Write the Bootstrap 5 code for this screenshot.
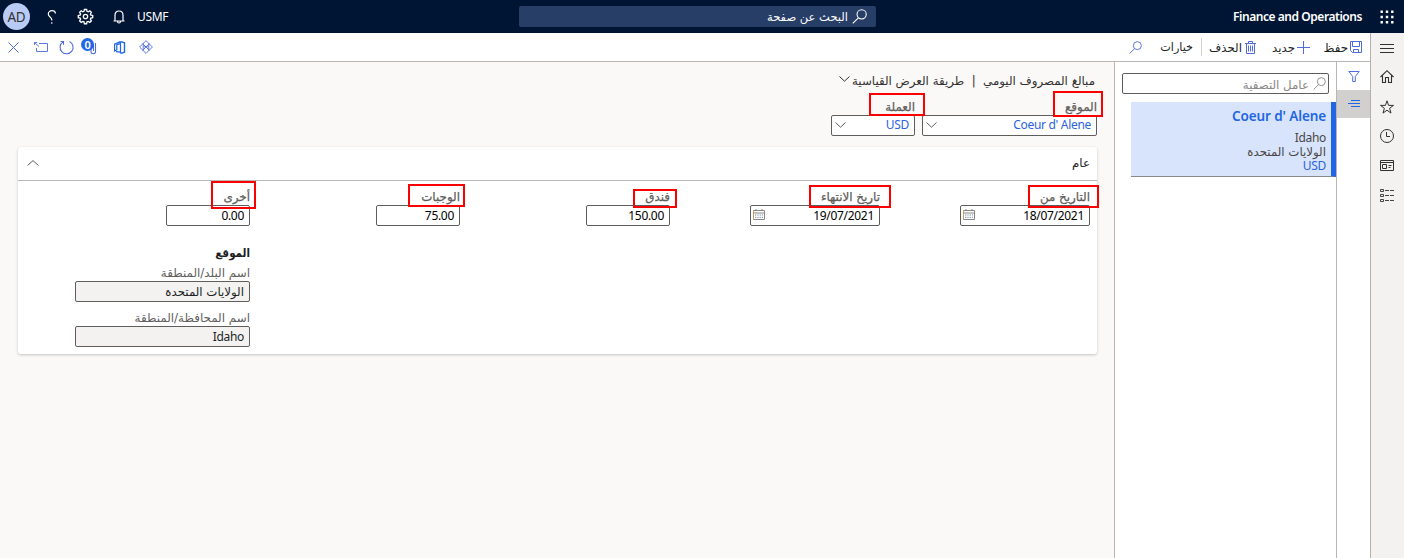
<!DOCTYPE html>
<html lang="ar" dir="rtl">
<head>
<meta charset="utf-8">
<title>Finance and Operations</title>
<link href="https://cdn.jsdelivr.net/npm/bootstrap@5.3.0/dist/css/bootstrap.min.css" rel="stylesheet">
<style>
body{font:12px/16px "Noto Sans","DejaVu Sans",sans-serif;letter-spacing:-.3px;color:#323130;background:#faf9f8;height:558px;overflow:hidden}
svg{display:block;fill:none;stroke:currentColor;flex:none;overflow:visible}
.dots{fill:#fff;stroke:none}
.ar{font-family:"DejaVu Sans",sans-serif;font-size:11.8px;letter-spacing:0;white-space:nowrap}
.topbar{height:33px;background:#001433;color:#fff}
.app-name{font-size:12px;font-weight:600;letter-spacing:-.45px;white-space:nowrap;padding-top:1px}
.avatar{width:27px;height:27px;background:#b9cbf5;color:#323130;font-size:13.5px}
.searchbar{inset-inline-end:519px;top:6px;width:357px;height:21px;background:#273e67;border-radius:2px;padding-inline-start:9px}
.searchbar .ar{font-size:11.5px;padding-top:1px}
.body-row{height:525px}
.rail{width:34px;background:#f3f2f1;border-left:1px solid #b3b0ad;padding:7px 1px 0 0;gap:15.8px}
.toolbar{height:29px;background:#fff;border-bottom:1px solid #b9b5b2;flex:none}
.toolbar .ar{font-size:11.8px;padding-top:2px;color:#201f1e}
.blue{color:#4f6bdc}
.tabs-col{width:34px;background:#fff;border-left:1px solid #b9b5b2}
.tab{height:28px}
.tab-on{background:#d2d0ce}
.list-col{width:222px;background:#fff;border-left:1px solid #b9b5b2;padding-top:11px}
.filter{width:207px;height:21px;border:1px solid #605e5c;border-radius:2px;margin-right:7px;color:#8a8886;padding:0 2px}
.filter .ar{padding-top:2px}
.record{width:205px;height:75px;background:#d8e4fb;border-right:5px solid #2266e3;border-bottom:1px solid #8a8886;margin-top:8px;padding:6px 5px 0}
.record h2{font-size:13.5px;line-height:17px;font-weight:600;letter-spacing:-.1px;color:#2266e3;margin:0 0 6px}
.record div{line-height:14px;color:#484644}
.record .link,.box.link{color:#2b63e0}
.box{height:21px;border:1px solid #605e5c;border-radius:2px;background:#fff;padding:0 5px 0 3px;line-height:19px;color:#000;white-space:nowrap}
.box.link{padding-bottom:2px}
.box svg{color:#605e5c}
.box.ro{background:#f3f2f1;color:#201f1e}
.box.ro.ar{line-height:20px}
.lbl{height:17px;line-height:18px;letter-spacing:0;color:#605e5c;font-size:11.9px;font-family:"DejaVu Sans",sans-serif;white-space:nowrap}
.hot{-webkit-text-stroke:.25px #605e5c}
.field{position:relative;flex:none}
.callout{position:absolute;border:2px solid #fa0000;box-sizing:border-box}
.title-row{height:36px;padding:1px 19px 0 0;gap:7.5px}
.panel{margin:0 17px 0 18px;height:207px;background:#fff;border-radius:3px;box-shadow:0 1px 3px rgba(0,0,0,.22)}
.panel-head{height:34px;border-bottom:1px solid #b9b9b9;padding:0 7px 1px 9px;color:#201f1e}
.panel-head svg{color:#605e5c}
.cell{width:210px;flex:none}
.group-name{margin-top:19px;height:19px;color:#201f1e;font-weight:700;letter-spacing:0;font-family:"DejaVu Sans",sans-serif;font-size:11.5px;font-stretch:condensed}
.count-dot{width:13px;height:13px;background:#2266e3;line-height:13px;font-size:11px;font-weight:600}
</style>
</head>
<body>
<svg width="0" height="0" class="position-absolute"><defs>
<symbol id="mag" viewBox="0 0 14 14"><circle cx="9" cy="5" r="4.300"/><path d="M6 8.200.7 13.400"/></symbol>
<symbol id="down" viewBox="0 0 11 6"><path d="M.5.5 5.500 5.200 10.500.5"/></symbol>
<symbol id="cal" viewBox="0 0 12 11"><path d="M.5 1.500h11v9H.5zM.5 4h11M3 0v2M9 0v2" stroke="#8a8886"/><path d="M2 6h8M2 8.300h8" stroke="#6f8fb0" stroke-dasharray="1.300 1"/><path d="M.5 1.500v9" stroke="#c99a5a"/></symbol>
</defs></svg>

<header class="topbar position-relative d-flex align-items-center justify-content-between">
  <div class="d-flex align-items-center" style="padding-right:10px;gap:18px">
    <svg class="dots" width="14" height="14" viewBox="0 0 14 14"><path d="M.5.5h2.400v2.400H.5zM5.800.5h2.400v2.400H5.800zM11.100.5h2.400v2.400h-2.400zM.5 5.800h2.400v2.400H.5zM5.800 5.800h2.400v2.400H5.800zM11.100 5.800h2.400v2.400h-2.400zM.5 11.100h2.400v2.400H.5zM5.800 11.100h2.400v2.400H5.800zM11.100 11.100h2.400v2.400h-2.400z"/></svg>
    <span dir="ltr" class="app-name">Finance and Operations</span>
  </div>
  <div class="searchbar position-absolute d-flex align-items-center gap-1">
    <svg width="15" height="15"><use href="#mag"/></svg><span class="ar">البحث عن صفحة</span>
  </div>
  <div dir="ltr" class="d-flex align-items-center" style="padding-left:3px">
    <span class="avatar rounded-circle d-flex align-items-center justify-content-center">AD</span>
    <svg width="10" height="14" viewBox="0 0 10 14" style="margin-left:17px;stroke-width:1.200"><path d="M8.500 3.500C8.300 1.500 6.800.7 5 .7 2.900.7 1.300 2 1.300 4c0 3 3.500 3 3.500 6v.5M4.800 12.300v1.400"/></svg>
    <svg width="15" height="15" viewBox="0 0 16 16" style="margin-left:21px;stroke-width:1.400"><path d="M6.800 1h2.400l.4 2 1.300.5 1.700-1.100 1.700 1.700-1.100 1.700.5 1.200 2 .4v2.400l-2 .4-.5 1.200 1.100 1.700-1.700 1.700-1.700-1.100-1.300.5-.4 2H6.800l-.4-2-1.300-.5-1.700 1.100-1.700-1.700 1.100-1.700-.5-1.200-2-.4V7.400l2-.4.5-1.200-1.100-1.700 1.700-1.700 1.700 1.100L6.400 3z" transform="translate(0 -.5)"/><circle cx="8" cy="8" r="2.300"/></svg>
    <svg width="12" height="14" viewBox="0 0 12 14" style="margin-left:20px;stroke-width:1.200"><path d="M.5 11h11M2 11V5.200C2 2.500 3.600 1 6 1s4 1.500 4 4.200V11M4.500 11.200c0 2.400 3 2.400 3 0"/></svg>
    <span style="margin:1px 0 0 12px">USMF</span>
  </div>
</header>

<div class="body-row d-flex">
  <nav class="rail d-flex flex-column align-items-center flex-shrink-0">
    <svg width="14" height="14" viewBox="0 0 14 14"><path d="M0 4.500h14M0 8.500h14M0 12.500h14"/></svg>
    <svg width="14" height="14" viewBox="0 0 14 14"><path d="M.5 7 7 .7 13.500 7M2.500 5.500v7h3v-5h3v5h3v-7" stroke-width="1.100"/></svg>
    <svg width="14" height="14" viewBox="0 0 14 14"><path d="m7 .8 1.600 4.600h4.900L9.600 8.300l1.400 4.800-4-2.900-4 2.900 1.400-4.800L.5 5.400h4.900z"/></svg>
    <svg width="14" height="14" viewBox="0 0 14 14"><circle cx="7" cy="7" r="6.500"/><path d="M6.500 3v4.500H10"/></svg>
    <svg width="14" height="14" viewBox="0 0 14 14"><path d="M.5 1.500h13v10H.5zM.5 3.500h13M2.500 5.500h4v4h-4zM8.500 6.500h3M8.500 8.500h2"/></svg>
    <svg width="14" height="14" viewBox="0 0 14 14"><path d="M.5.500h3v2h-3zM.5 5.500h3v2h-3zM.5 10.500h3v2h-3zM5 1.500h4M10 1.500h4M5 6.500h4M10 6.500h4M5 11.500h4M10 11.500h4" stroke-width=".9"/></svg>
  </nav>

  <div class="flex-grow-1 d-flex flex-column">
    <div class="toolbar d-flex align-items-center justify-content-between">
      <div class="d-flex align-items-center" style="padding-right:8px">
        <svg class="blue" width="12" height="12" viewBox="0 0 12 12"><path d="M.5.5h11v11h-9l-2-2zM2.500.5v5h7v-5M3.500 11.500v-3h5v3"/></svg>
        <span class="ar flex-shrink-0" style="width:24px;margin-right:2px">حفظ</span>
        <svg class="blue" width="13" height="13" viewBox="0 0 13 13" style="margin-right:14px"><path d="M6.500 0v13M0 6.500h13"/></svg>
        <span class="ar flex-shrink-0" style="width:23px;margin-right:2px">جديد</span>
        <svg class="blue" width="11" height="13" viewBox="0 0 11 13" style="margin-right:16px"><path d="M0 2.500h11M1.500 2.500v10h8v-10M3.500 2V.5h4V2M3.500 4.500v6M5.500 4.500v6M7.500 4.500v6"/></svg>
        <span class="ar flex-shrink-0" style="width:33px;margin-right:3px">الحذف</span>
        <span style="width:1px;height:18px;background:#d2d0ce;margin-right:7px"></span>
        <span class="ar flex-shrink-0" style="width:33px;margin-right:8px;font-size:11.200px">خيارات</span>
        <svg class="blue" width="13" height="13" style="margin-right:18px"><use href="#mag"/></svg>
      </div>
      <div dir="ltr" class="blue d-flex align-items-center" style="padding-left:8px">
        <svg width="11" height="11" viewBox="0 0 11 11"><path d="m.5.5 10 10M10.500.5l-10 10"/></svg>
        <svg width="14" height="10" viewBox="0 0 14 10" style="margin-left:15px"><path d="M5 1.500h8.500v8H2.500V6M5 4.500.5.5M.5 3V.5H3" stroke-width=".9"/></svg>
        <svg width="15" height="15" viewBox="0 0 15 15" style="margin-left:11px"><path d="M10.500 1.500A6.500 6.500 0 1 1 4 1.900M1.500 1.500h3v3.300" stroke-width="1.100"/></svg>
        <span class="position-relative" style="width:17px;height:17px;margin-left:7px">
          <svg width="17" height="17" viewBox="0 0 17 17"><path d="M14.500 4v8.500c0 3-4.500 3-4.500 0V6M12.500 6v6" stroke-width="1.100"/></svg>
          <span class="count-dot position-absolute start-0 rounded-circle text-white text-center" style="top:-1px">0</span>
        </span>
        <svg width="11" height="13" viewBox="0 0 11 13" style="margin-left:16px;color:#2266e3"><path d="M6.500.6v11.800M6.500.6.6 3.200V10L2.800 8.900V3.700l3.700-1.100M2 10.600l4.500.6" stroke-width="1.200"/><path d="M6.800.6 10.500 1.800v9.400l-3.700 1.200" stroke-width="1.400"/></svg>
        <svg width="14" height="14" viewBox="0 0 14 14" style="margin-left:14px"><path d="M7 .6 13.400 7 7 13.400.6 7zM3.800 3.800l6.400 6.400M10.200 3.800 3.800 10.200M4.200 3.400v3.400h5.600V3.400M4.200 10.600V7.200M9.800 10.600V7.200" stroke-width=".9"/></svg>
      </div>
    </div>

    <div class="d-flex flex-grow-1">
      <aside class="tabs-col flex-shrink-0 blue">
        <div class="tab d-flex align-items-center justify-content-center"><svg width="12" height="11" viewBox="0 0 12 11"><path d="M.8.5h10.400L7.300 5.500v5H4.700v-5z"/></svg></div>
        <div class="tab tab-on d-flex align-items-center justify-content-center"><svg width="12" height="8" viewBox="0 0 12 8"><path d="M3 .5h9M0 3.500h12M3 6.500h9" stroke="#2266e3"/></svg></div>
      </aside>
      <section class="list-col flex-shrink-0">
        <div class="filter d-flex align-items-center gap-1"><svg width="13" height="13"><use href="#mag"/></svg><span class="ar">عامل التصفية</span></div>
        <article class="record">
          <h2 dir="ltr" class="text-end">Coeur d' Alene</h2>
          <div>Idaho</div><div class="ar">الولايات المتحدة</div><div class="link">USD</div>
        </article>
      </section>

      <main class="flex-grow-1">
        <div class="title-row d-flex align-items-center ar">
          <span>مبالغ المصروف اليومي</span><span>|</span><span>طريقة العرض القياسية</span><svg width="11" height="6" style="margin:0 -5px 3px 0"><use href="#down"/></svg>
        </div>
        <div class="d-flex" style="height:49px;padding-right:17px;gap:7px">
          <div class="field" style="width:175px">
            <div class="lbl hot">الموقع</div>
            <div class="box d-flex align-items-center justify-content-between link"><span dir="ltr">Coeur d' Alene</span><svg width="11" height="6"><use href="#down"/></svg></div>
            <i class="callout" style="right:-6px;top:-7px;width:50px;height:26px"></i>
          </div>
          <div class="field" style="width:84px">
            <div class="lbl hot">العملة</div>
            <div class="box d-flex align-items-center justify-content-between link"><span>USD</span><svg width="11" height="6"><use href="#down"/></svg></div>
            <i class="callout" style="right:-10px;top:-5px;width:56px;height:23px"></i>
          </div>
        </div>
        <section class="panel">
          <div class="panel-head d-flex align-items-center justify-content-between"><span class="ar">عام</span><svg width="12" height="6" viewBox="0 0 12 6"><path d="M.5 5.500 6 .6l5.500 4.900"/></svg></div>
          <div class="d-flex" style="padding:7px 7px 0 0">
            <div class="cell"><div class="field" style="width:130px"><div class="lbl hot">التاريخ من</div><div class="box d-flex align-items-center justify-content-between"><span>18/07/2021</span><svg width="12" height="11" style="margin:0 0 2px -1px"><use href="#cal"/></svg></div><i class="callout" style="right:-9px;top:-3px;width:71px;height:23px"></i></div></div>
            <div class="cell"><div class="field" style="width:130px"><div class="lbl hot">تاريخ الانتهاء</div><div class="box d-flex align-items-center justify-content-between"><span>19/07/2021</span><svg width="12" height="11" style="margin:0 0 2px -1px"><use href="#cal"/></svg></div><i class="callout" style="right:-11px;top:-3px;width:82px;height:23px"></i></div></div>
            <div class="cell"><div class="field" style="width:84px"><div class="lbl hot">فندق</div><div class="box">150.00</div><i class="callout" style="right:-7px;top:1px;width:44px;height:19px"></i></div></div>
            <div class="cell"><div class="field" style="width:84px"><div class="lbl hot">الوجبات</div><div class="box">75.00</div><i class="callout" style="right:-5px;top:-4px;width:57px;height:23px"></i></div></div>
            <div style="width:175px">
              <div class="field" style="width:84px"><div class="lbl hot">أخرى</div><div class="box">0.00</div><i class="callout" style="right:-6px;top:-7px;width:45px;height:28px"></i></div>
              <div class="group-name">الموقع</div>
              <div class="lbl">اسم البلد/المنطقة</div>
              <div class="box ro ar">الولايات المتحدة</div>
              <div class="lbl" style="margin-top:7px">اسم المحافظة/المنطقة</div>
              <div class="box ro">Idaho</div>
            </div>
          </div>
        </section>
      </main>
    </div>
  </div>
</div>
<script src="https://cdn.jsdelivr.net/npm/bootstrap@5.3.0/dist/js/bootstrap.bundle.min.js"></script>
</body>
</html>
